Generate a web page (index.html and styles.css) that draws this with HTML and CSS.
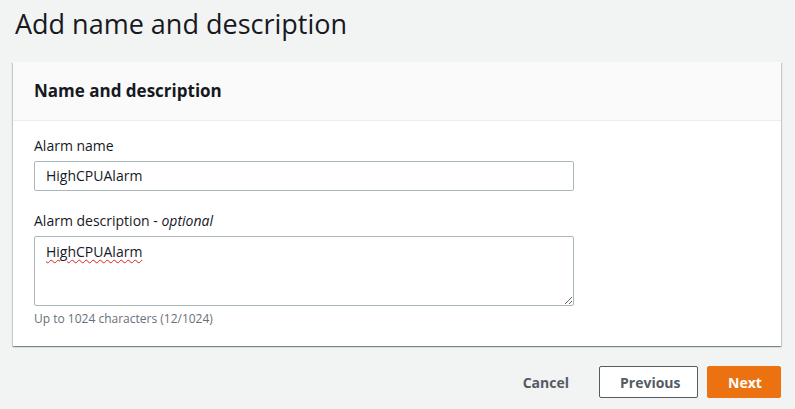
FILE: index.html
```html
<!DOCTYPE html>
<html lang="en">
<head>
<meta charset="utf-8">
<title>Add name and description</title>
<link rel="stylesheet" href="styles.css">
</head>
<body>
<div class="page">
  <h1 class="title">Add name and description</h1>
  <section class="card">
    <div class="card-header"><h2>Name and description</h2></div>
    <div class="card-body">
      <div class="field">
        <label class="label">Alarm name</label>
        <div class="input">HighCPUAlarm</div>
      </div>
      <div class="field">
        <label class="label">Alarm description - <i>optional</i></label>
        <div class="textarea"><span class="misspelled">HighCPUAlarm</span></div>
        <div class="hint">Up to 1024 characters (12/1024)</div>
      </div>
    </div>
  </section>
  <div class="actions">
    <button class="btn btn-link">Cancel</button>
    <button class="btn btn-normal">Previous</button>
    <button class="btn btn-primary">Next</button>
  </div>
</div>
</body>
</html>
```
FILE: styles.css
```css
html, body {
  margin: 0;
  padding: 0;
  background: #f2f3f3;
}
body {
  font-family: "Open Sans", "Noto Sans", "Liberation Sans", sans-serif;
  color: #16191f;
}
.page {
  padding: 6px 14px 0 13px;
}
.title {
  margin: 0 0 0 2px;
  font-size: 27px;
  line-height: 36px;
  font-weight: 400;
  color: #16191f;
}
.card {
  margin-top: 20px;
  background: #fff;
  box-shadow: 0 1px 1px 0 rgba(0, 28, 36, 0.3), 1px 1px 1px 0 rgba(0, 28, 36, 0.15), -1px 1px 1px 0 rgba(0, 28, 36, 0.15);
}
.card-header {
  background: #fafafa;
  border-bottom: 1px solid #eaeded;
  padding: 18px 21px 18px;
}
.card-header h2 {
  margin: 0;
  font-size: 17px;
  line-height: 22px;
  font-weight: 700;
}
.card-body {
  padding: 14px 20px 19px 21px;
}
.field + .field {
  margin-top: 19px;
}
.label {
  display: block;
  font-size: 14px;
  line-height: 22px;
  margin-bottom: 4px;
}
.input {
  height: 28px;
  border: 1px solid #aab7b8;
  border-radius: 2px;
  padding: 0 11px;
  font-size: 14px;
  line-height: 28px;
}
.input, .textarea {
  width: 516px;
}
.textarea {
  height: 58px;
  border: 1px solid #aab7b8;
  border-radius: 2px;
  padding: 5px 11px 5px 11px;
  font-size: 14px;
  line-height: 20px;
  overflow: auto;
  resize: both;
}
.misspelled {
  text-decoration: underline wavy #e02020;
  text-decoration-thickness: 1px;
  text-underline-offset: 2px;
}
.hint {
  margin-top: 5px;
  font-size: 12px;
  line-height: 16px;
  color: #687078;
}
.actions {
  display: flex;
  justify-content: flex-end;
  gap: 9px;
  margin-top: 20px;
}
.btn {
  font-family: inherit;
  font-size: 14px;
  font-weight: 700;
  height: 32px;
  border-radius: 2px;
  padding: 0 20px;
  cursor: pointer;
}
.btn-link {
  background: transparent;
  border: 1px solid transparent;
  color: #545b64;
}
.btn-normal {
  background: #fff;
  border: 1px solid #545b64;
  color: #545b64;
  width: 99px;
}
.btn-primary {
  background: #ec7211;
  border: 1px solid #ec7211;
  color: #fff;
  width: 74px;
}
```
